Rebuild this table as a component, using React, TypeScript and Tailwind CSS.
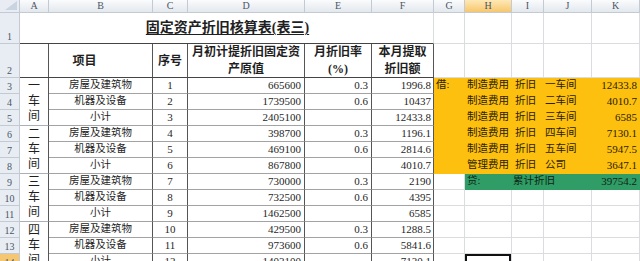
const letters = ["A", "B", "C", "D", "E", "F", "G", "H", "I", "J", "K"];

const rows = [
  { b: "房屋及建筑物", c: "1", d: "665600", e: "0.3", f: "1996.8" },
  { b: "机器及设备", c: "2", d: "1739500", e: "0.6", f: "10437" },
  { b: "小计", c: "3", d: "2405100", e: "", f: "12433.8" },
  { b: "房屋及建筑物", c: "4", d: "398700", e: "0.3", f: "1196.1" },
  { b: "机器及设备", c: "5", d: "469100", e: "0.6", f: "2814.6" },
  { b: "小计", c: "6", d: "867800", e: "", f: "4010.7" },
  { b: "房屋及建筑物", c: "7", d: "730000", e: "0.3", f: "2190" },
  { b: "机器及设备", c: "8", d: "732500", e: "0.6", f: "4395" },
  { b: "小计", c: "9", d: "1462500", e: "", f: "6585" },
  { b: "房屋及建筑物", c: "10", d: "429500", e: "0.3", f: "1288.5" },
  { b: "机器及设备", c: "11", d: "973600", e: "0.6", f: "5841.6" },
  { b: "小计", c: "12", d: "1403100", e: "", f: "7130.1" },
];

const groups = ["一车间", "二车间", "三车间", "四车间"];

// 借方分录 (G..K)
const entries = [
  ["借:", "制造费用", "折旧", "一车间", "12433.8"],
  ["", "制造费用", "折旧", "二车间", "4010.7"],
  ["", "制造费用", "折旧", "三车间", "6585"],
  ["", "制造费用", "折旧", "四车间", "7130.1"],
  ["", "制造费用", "折旧", "五车间", "5947.5"],
  ["", "管理费用", "折旧", "公司", "3647.1"],
];

const grid = "border-r border-b border-[#dadcdd]";
const tbl = "border-r border-b border-r-[#555] border-b-[#a3a3a3]";
const head = "border-r border-b border-r-[#555] border-b-[#444]";
const orange = "bg-[#fec00f] border-r border-b border-[#fec00f] text-[#2a2200]";
const green = "bg-[#2f9d65] border-r border-b border-[#2f9d65] text-[#0f2416]";

function RowHead({ n, active }: { n: number; active?: boolean }) {
  return (
    <div
      className={`flex items-end justify-center pb-[1px] text-[10px] leading-none text-[#4c5563] border-r border-b border-[#c3cad4] ${
        active ? "bg-[#f6c772]" : "bg-[#e8edf4]"
      }`}
    >
      {n}
    </div>
  );
}

export default function App() {
  return (
    <div className="w-[640px] h-[261px] overflow-hidden bg-white font-['Liberation_Serif','Noto_Sans_CJK_SC',serif] text-[#1f1f1f]">
      <div className="grid grid-cols-[20px_29px_104px_35px_117px_67px_62px_31px_47px_32px_48px_48px] grid-rows-[13px_31px_34px_repeat(12,16px)]">
        {/* column headers */}
        <div className="relative bg-[#e9edf3] border-r border-b border-[#c3cad4]">
          <svg className="absolute right-[2px] bottom-[2px]" width="12" height="9" viewBox="0 0 12 9">
            <polygon points="12,0 12,9 0,9" fill="#c9d4e2" />
          </svg>
        </div>
        {letters.map((l) => (
          <div
            key={l}
            className={`flex items-center justify-center text-[10px] leading-none text-[#4c5563] border-r border-b border-[#c3cad4] ${
              l === "H" ? "bg-linear-to-b from-[#fde9b6] to-[#f7c66b]" : "bg-linear-to-b from-[#fafbfc] to-[#e3e8ee]"
            }`}
          >
            {l}
          </div>
        ))}

        {/* row 1: title */}
        <RowHead n={1} />
        <div className="col-span-6 flex items-center justify-center border-r border-b border-r-[#dadcdd] border-b-[#444]">
          <span className="text-[14px] font-bold underline underline-offset-2 leading-none pl-[2px]">
            固定资产折旧核算表(表三)
          </span>
        </div>
        {[0, 1, 2, 3, 4].map((i) => (
          <div key={i} className={grid} />
        ))}

        {/* row 2: headings */}
        <RowHead n={2} />
        <div className={head} />
        <div className={`${head} flex items-center justify-center pr-[32px] text-[12px] font-bold`}>项目</div>
        <div className={`${head} flex items-center justify-center text-[12px] font-bold`}>序号</div>
        <div className={`${head} flex flex-col items-center justify-center text-[12px] font-bold leading-[17px]`}>
          <span>月初计提折旧固定资</span>
          <span>产原值</span>
        </div>
        <div className={`${head} flex flex-col items-center justify-center text-[12px] font-bold leading-[17px]`}>
          <span>月折旧率</span>
          <span>(%)</span>
        </div>
        <div className={`${head} flex flex-col items-center justify-center text-[12px] font-bold leading-[17px]`}>
          <span>本月提取</span>
          <span>折旧额</span>
        </div>
        {[0, 1, 2, 3, 4].map((i) => (
          <div key={i} className={grid} />
        ))}

        {/* rows 3-14 */}
        {rows.map((r, i) => {
          const n = i + 3;
          const entry = entries[i];
          return [
            <RowHead key={`h${n}`} n={n} active={n === 14} />,
            i % 3 === 0 ? (
              <div
                key={`a${n}`}
                className="row-span-3 flex flex-col items-center justify-center text-[12px] leading-[15px] border-r border-b border-r-[#555] border-b-[#a9b0b8]"
              >
                {groups[i / 3].split("").map((ch) => (
                  <span key={ch}>{ch}</span>
                ))}
              </div>
            ) : null,
            <div key={`b${n}`} className={`${tbl} flex items-center justify-center text-[10.5px] leading-none`}>
              {r.b}
            </div>,
            <div key={`c${n}`} className={`${tbl} flex items-center justify-center text-[11px] leading-none`}>
              {r.c}
            </div>,
            <div key={`d${n}`} className={`${tbl} flex items-center justify-end pr-[3px] text-[11px] leading-none`}>
              {r.d}
            </div>,
            <div key={`e${n}`} className={`${tbl} flex items-center justify-end pr-[3px] text-[11px] leading-none`}>
              {r.e}
            </div>,
            <div key={`f${n}`} className={`${tbl} flex items-center justify-end pr-[2px] text-[11px] leading-none`}>
              {r.f}
            </div>,
            ...(entry
              ? [
                  <div key={`g${n}`} className={`${orange} flex items-center pl-[2px] text-[10.5px] leading-none`}>
                    {entry[0]}
                  </div>,
                  <div key={`hh${n}`} className={`${orange} flex items-center pl-[2px] text-[10.5px] leading-none whitespace-nowrap`}>
                    {entry[1]}
                  </div>,
                  <div key={`i${n}`} className={`${orange} flex items-center pl-[3px] text-[10.5px] leading-none whitespace-nowrap`}>
                    {entry[2]}
                  </div>,
                  <div key={`j${n}`} className={`${orange} flex items-center pl-[1px] text-[10.5px] leading-none whitespace-nowrap`}>
                    {entry[3]}
                  </div>,
                  <div key={`k${n}`} className={`${orange} flex items-center justify-end pr-[2px] text-[11px] leading-none`}>
                    {entry[4]}
                  </div>,
                ]
              : n === 9
              ? [
                  <div key={`g${n}`} className={grid} />,
                  <div key={`hh${n}`} className={`${green} flex items-center pl-[2px] text-[10.5px] leading-none`}>
                    贷:
                  </div>,
                  <div key={`i${n}`} className={`${green} col-span-2 flex items-center pl-[1px] text-[10.5px] leading-none whitespace-nowrap`}>
                    累计折旧
                  </div>,
                  <div key={`k${n}`} className={`${green} flex items-center justify-end pr-[2px] text-[11px] leading-none`}>
                    39754.2
                  </div>,
                ]
              : [0, 1, 2, 3, 4].map((c) => (
                  <div
                    key={`x${n}-${c}`}
                    className={`${grid} ${n === 14 && c === 1 ? "shadow-[inset_0_0_0_2px_#111]" : ""}`}
                  />
                ))),
          ];
        })}
      </div>
    </div>
  );
}
